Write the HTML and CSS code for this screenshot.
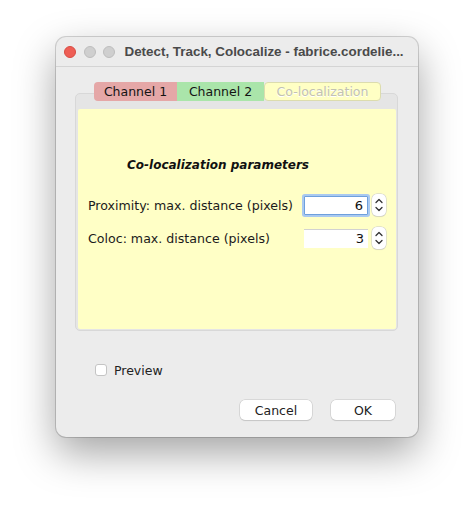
FILE: index.html
```html
<!DOCTYPE html>
<html>
<head>
<meta charset="utf-8">
<link rel="stylesheet" href="styles.css">
</head>
<body>
<div class="window">
  <div class="titlebar">
    <span class="light red"></span>
    <span class="light"></span>
    <span class="light"></span>
    <span class="title">Detect, Track, Colocalize - fabrice.cordelie...</span>
  </div>
  <div class="content">
    <div class="tabs">
      <div class="tab tab-red">Channel 1</div>
      <div class="tab tab-green">Channel 2</div>
      <div class="tab tab-yellow">Co-localization</div>
    </div>
    <div class="panel">
      <div class="inner">
        <div class="heading">Co-localization parameters</div>
        <div class="row">
          <span class="label">Proximity: max. distance (pixels)</span>
          <span class="field focus">6</span>
          <span class="spin"><svg width="12" height="20" viewBox="0 0 12 20"><path d="M3 7.5 L6 4.5 L9 7.5 M3 12.5 L6 15.5 L9 12.5" fill="none" stroke="#333" stroke-width="1.3" stroke-linecap="round" stroke-linejoin="round"/></svg></span>
        </div>
        <div class="row row2">
          <span class="label">Coloc: max. distance (pixels)</span>
          <span class="field">3</span>
          <span class="spin"><svg width="12" height="20" viewBox="0 0 12 20"><path d="M3 7.5 L6 4.5 L9 7.5 M3 12.5 L6 15.5 L9 12.5" fill="none" stroke="#333" stroke-width="1.3" stroke-linecap="round" stroke-linejoin="round"/></svg></span>
        </div>
      </div>
    </div>
    <div class="preview">
      <span class="check"></span>
      <span>Preview</span>
    </div>
    <div class="buttons">
      <span class="btn cancel">Cancel</span>
      <span class="btn ok">OK</span>
    </div>
  </div>
</div>
</body>
</html>
```
FILE: styles.css
```css
html, body {
  margin: 0;
  padding: 0;
  background: #ffffff;
}
body {
  font-family: "DejaVu Sans", "Noto Sans", sans-serif;
  color: #1d1d1d;
  min-height: 510px;
  padding-top: 1px;
  box-sizing: border-box;
}
.window {
  box-sizing: border-box;
  width: 362px;
  height: 400px;
  margin: 36px 0 0 56px;
  background: #ececec;
  border-radius: 10px;
  box-shadow: 0 0 0 1px rgba(0,0,0,0.16), 0 16px 40px rgba(0,0,0,0.36);
  overflow: hidden;
  display: flex;
  flex-direction: column;
}
.titlebar {
  height: 29px;
  border-bottom: 1px solid #d4d4d4;
  display: flex;
  align-items: center;
  padding-left: 8px;
  flex-shrink: 0;
}
.light {
  width: 12px;
  height: 12px;
  border-radius: 50%;
  background: #cfcfcf;
  border: 0.5px solid #bdbdbd;
  box-sizing: border-box;
  margin-right: 7.5px;
}
.light.red {
  background: #ee5e55;
  border-color: #d84c43;
}
.title {
  margin-left: 2px;
  font-family: "Liberation Sans", Arial, sans-serif;
  font-weight: bold;
  font-size: 13.4px;
  color: #4a4a4a;
  white-space: nowrap;
}
.content {
  padding: 15px 20px 0 19px;
  display: flex;
  flex-direction: column;
}
.tabs {
  display: flex;
  margin-left: 19px;
  height: 19px;
  margin-bottom: -8px;
  position: relative;
  z-index: 1;
  font-size: 12.5px;
}
.tab {
  box-sizing: border-box;
  height: 19px;
  display: flex;
  align-items: center;
  justify-content: center;
}
.tab-red {
  width: 83px;
  background: #e5a7a7;
  border-radius: 4px 0 0 4px;
  color: #141414;
}
.tab-green {
  width: 87px;
  background: #aae5aa;
  color: #141414;
}
.tab-yellow {
  width: 117px;
  background: #ffffc4;
  border: 1px solid #dcdcae;
  border-radius: 4px;
  color: #c2c2b2;
  text-shadow: 0 1px 0 #ffffff;
}
.panel {
  box-sizing: border-box;
  width: 323px;
  height: 238px;
  background: #e5e5e5;
  border: 1px solid #d8d8d8;
  border-radius: 5px;
  padding: 15px 1px 1px 2px;
}
.inner {
  box-sizing: border-box;
  height: 220px;
  width: 318px;
  background: #ffffc6;
  border-radius: 2px;
  padding: 49px 0 0 10px;
}
.heading {
  font-weight: bold;
  font-style: italic;
  font-size: 12px;
  margin-left: 39px;
  height: 18px;
  color: #111;
}
.row {
  display: flex;
  align-items: center;
  margin-top: 18px;
  height: 22px;
  font-size: 12.6px;
}
.row2 {
  margin-top: 11px;
}
.label {
  width: 216px;
  white-space: nowrap;
  color: #1b1b1b;
}
.field {
  box-sizing: border-box;
  width: 64px;
  height: 19px;
  background: #fff;
  border-top: 1px solid #d2d2d2;
  text-align: right;
  padding-right: 4px;
  font-size: 13px;
  line-height: 18px;
  color: #111;
}
.field.focus {
  border: 1px solid #6ea0dc;
  box-shadow: 0 0 0 2px #a9c9f0;
  border-radius: 1px;
}
.spin {
  margin-left: 4px;
  width: 14px;
  height: 22px;
  box-sizing: border-box;
  background: #fff;
  border-radius: 5px;
  box-shadow: 0 0 0 0.5px #c9c9c9, 0 1px 1px rgba(0,0,0,0.1);
  display: flex;
  align-items: center;
  justify-content: center;
}
.preview {
  display: flex;
  align-items: center;
  margin: 32px 0 0 20px;
  font-size: 12.5px;
  color: #222;
  height: 14px;
}
.check {
  width: 12px;
  height: 12px;
  box-sizing: border-box;
  background: #fff;
  border: 1px solid #c4c4c4;
  border-radius: 3px;
  margin-right: 7px;
}
.buttons {
  display: flex;
  justify-content: flex-end;
  margin-top: 23px;
  margin-right: 3px;
}
.btn {
  box-sizing: border-box;
  height: 20px;
  background: #fff;
  border-radius: 5px;
  box-shadow: 0 0 0 0.5px #c4c4c4, 0 1px 1px rgba(0,0,0,0.15);
  display: flex;
  align-items: center;
  justify-content: center;
  font-size: 12.5px;
  color: #222;
}
.cancel {
  width: 72px;
}
.ok {
  width: 64px;
  margin-left: 19px;
}
```
